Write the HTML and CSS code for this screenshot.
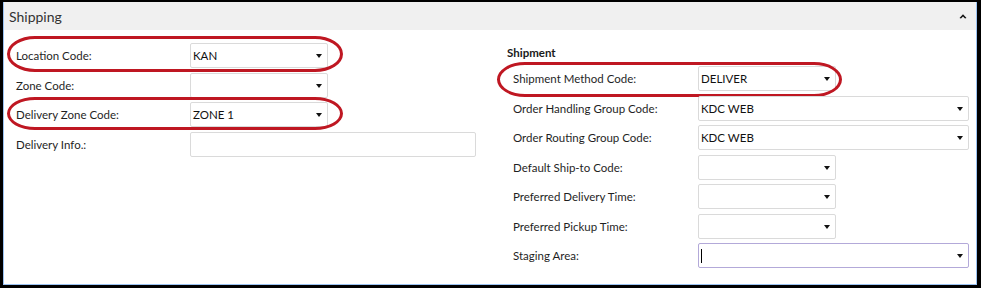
FILE: index.html
```html
<!DOCTYPE html>
<html lang="en">
<head>
    <meta charset="UTF-8">
    <title>Shipping</title>
    <link rel="stylesheet" href="styles.css">
</head>
<body>
    <div class="frame">
        <div class="panel">
            <!-- Cabecera del grupo -->
            <div class="panel-header">
                <span class="panel-title">Shipping</span>
                <svg class="collapse-icon" width="8" height="6" viewBox="0 0 8 6">
                    <path d="M0.5 5 L4 1.2 L7.5 5 L6 5.6 L4 3.5 L2 5.6 Z" fill="#111"/>
                </svg>
            </div>

            <div class="panel-body">
                <!-- Columna izquierda -->
                <div class="col col-left">
                    <div class="field">
                        <span class="label">Location Code:</span>
                        <div class="input select short">KAN</div>
                        <div class="mark mark-location"></div>
                    </div>
                    <div class="field">
                        <span class="label">Zone Code:</span>
                        <div class="input select short"></div>
                    </div>
                    <div class="field">
                        <span class="label">Delivery Zone Code:</span>
                        <div class="input select short">ZONE 1</div>
                        <div class="mark mark-zone"></div>
                    </div>
                    <div class="field">
                        <span class="label">Delivery Info.:</span>
                        <div class="input wide-left"></div>
                    </div>
                </div>

                <!-- Columna derecha -->
                <div class="col col-right">
                    <div class="group-title">Shipment</div>
                    <div class="field">
                        <span class="label">Shipment Method Code:</span>
                        <div class="input select short">DELIVER</div>
                        <div class="mark mark-method"></div>
                    </div>
                    <div class="field">
                        <span class="label">Order Handling Group Code:</span>
                        <div class="input select wide">KDC WEB</div>
                    </div>
                    <div class="field">
                        <span class="label">Order Routing Group Code:</span>
                        <div class="input select wide">KDC WEB</div>
                    </div>
                    <div class="field">
                        <span class="label">Default Ship-to Code:</span>
                        <div class="input select short"></div>
                    </div>
                    <div class="field">
                        <span class="label">Preferred Delivery Time:</span>
                        <div class="input select short"></div>
                    </div>
                    <div class="field">
                        <span class="label">Preferred Pickup Time:</span>
                        <div class="input select short"></div>
                    </div>
                    <div class="field">
                        <span class="label">Staging Area:</span>
                        <div class="input select wide focused"><span class="caret"></span></div>
                    </div>
                </div>
            </div>
        </div>
    </div>
</body>
</html>
```

FILE: styles.css
```css
body {
    margin: 0;
    padding: 0;
    background-color: #fff;
    font-family: 'Lato', 'Liberation Sans', sans-serif;
    font-size: 11.5px;
    color: #1a1a1a;
}

.frame {
    width: 981px;
    height: 288px;
    box-sizing: border-box;
    border-style: solid;
    border-color: #000;
    border-width: 2px 4px 3px 3px;
    margin-right: 1px;
}

.panel {
    height: 100%;
    box-sizing: border-box;
    border: 1px solid #9cc3f2;
    border-top: none;
    background-color: #fff;
}

.panel-header {
    height: 28px;
    background-color: #f0f0f0;
    display: flex;
    align-items: center;
    justify-content: space-between;
    padding: 0 9px 0 5px;
}

.panel-title {
    font-size: 14px;
    color: #333;
}

.collapse-icon {
    display: block;
    margin-top: -1px;
}

.panel-body {
    display: flex;
}

.col {
    display: flex;
    flex-direction: column;
    gap: 4.5px;
}

.col-left {
    width: 479px;
    padding: 13px 0 0 12px;
}

.col-right {
    padding: 15px 0 0 12px;
}

.group-title {
    font-weight: bold;
    height: 16px;
    line-height: 16px;
    margin-bottom: 0.5px;
}

.field {
    position: relative;
    display: flex;
    align-items: center;
    height: 25px;
}

.col-left .label {
    width: 174px;
}

.col-right .label {
    width: 185px;
    padding-left: 6px;
}

.label {
    color: #1f1f1f;
    white-space: nowrap;
}

.input {
    position: relative;
    height: 25px;
    box-sizing: border-box;
    border: 1px solid #dadada;
    border-radius: 2px;
    background-color: #fff;
    padding-left: 2px;
    line-height: 23px;
    color: #111;
}

.input.short {
    width: 138px;
}

.input.wide {
    width: 271px;
}

.input.wide-left {
    width: 286px;
}

.input.select::after {
    content: "";
    position: absolute;
    right: 5px;
    top: 10px;
    border-left: 3px solid transparent;
    border-right: 3px solid transparent;
    border-top: 4px solid #111;
}

.input.focused {
    border-color: #b3a9d9;
}

.caret {
    position: absolute;
    left: 2px;
    top: 5px;
    width: 1px;
    height: 14px;
    background-color: #000;
}

/* Marcas rojas dibujadas a mano */
.mark {
    position: absolute;
    border: 3px solid #bf1722;
    pointer-events: none;
}

.mark-location {
    left: -9px;
    top: -7px;
    width: 330px;
    height: 30px;
    border-radius: 28px / 50%;
}

.mark-zone {
    left: -9px;
    top: -5px;
    width: 330px;
    height: 27px;
    border-radius: 28px / 50%;
}

.mark-method {
    left: -10px;
    top: -4px;
    width: 339px;
    height: 29px;
    border-radius: 28px / 50%;
}
```
